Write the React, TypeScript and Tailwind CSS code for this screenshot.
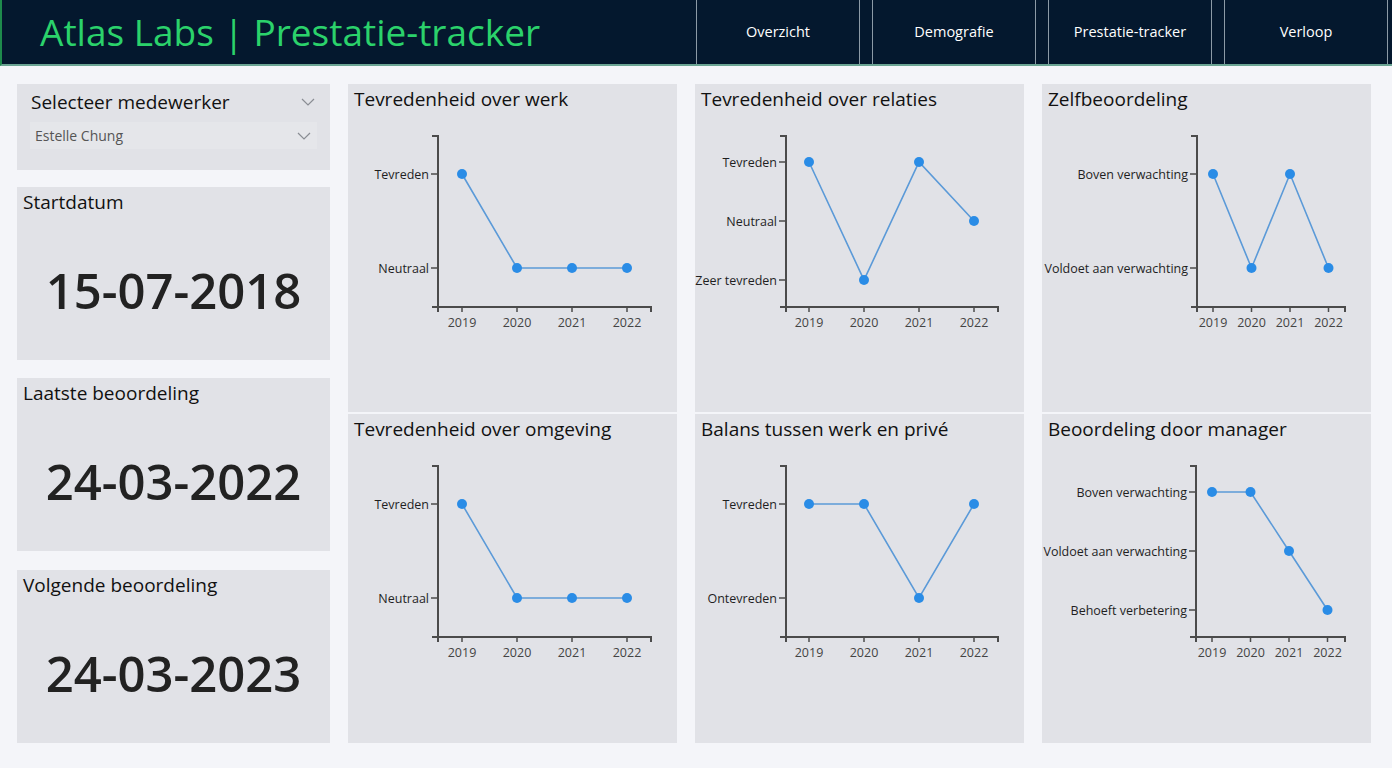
import React from "react";

const YEARS = ["2019", "2020", "2021", "2022"];

type ChartDef = {
  title: string;
  labels: string[];
  values: number[];
  axisX: number;
  firstX: number;
  step: number;
};

const CHARTS: ChartDef[] = [
  { title: "Tevredenheid over werk", labels: ["Tevreden", "Neutraal"], values: [0, 1, 1, 1], axisX: 90, firstX: 114, step: 55 },
  { title: "Tevredenheid over relaties", labels: ["Tevreden", "Neutraal", "Zeer tevreden"], values: [0, 2, 0, 1], axisX: 91, firstX: 114, step: 55 },
  { title: "Zelfbeoordeling", labels: ["Boven verwachting", "Voldoet aan verwachting"], values: [0, 1, 0, 1], axisX: 155, firstX: 171, step: 38.5 },
  { title: "Tevredenheid over omgeving", labels: ["Tevreden", "Neutraal"], values: [0, 1, 1, 1], axisX: 90, firstX: 114, step: 55 },
  { title: "Balans tussen werk en privé", labels: ["Tevreden", "Ontevreden"], values: [0, 0, 1, 0], axisX: 91, firstX: 114, step: 55 },
  { title: "Beoordeling door manager", labels: ["Boven verwachting", "Voldoet aan verwachting", "Behoeft verbetering"], values: [0, 0, 1, 2], axisX: 154, firstX: 170, step: 38.5 },
];

const NAV = ["Overzicht", "Demografie", "Prestatie-tracker", "Verloop"];

function Chevron({ className = "" }: { className?: string }) {
  return (
    <svg className={className} width="14" height="8" viewBox="0 0 14 8" fill="none">
      <path d="M1 1l6 6 6-6" stroke="#8a8d94" strokeWidth="1.2" />
    </svg>
  );
}

function LineChartCard({ def }: { def: ChartDef }) {
  const { title, labels, values, axisX, firstX, step } = def;
  const levels = labels.length === 2 ? [61, 155] : [49, 108, 167];
  const pts = values.map((v, i) => ({ x: firstX + i * step, y: levels[v] }));
  const bottom = 194;
  return (
    <div className="bg-[#e1e2e7] h-full">
      <h2 className="px-[6px] pt-[1px] leading-7 text-[19px] text-[#111]">{title}</h2>
      <svg width="329" height="240" viewBox="0 0 329 240" className="block">
        {/* axes */}
        <path d={`M${axisX - 6} 23H${axisX}V${bottom + 5}`} stroke="#4b4b4b" strokeWidth="2" fill="none" />
        <path d={`M${axisX - 6} ${bottom}H303V${bottom + 5}`} stroke="#4b4b4b" strokeWidth="2" fill="none" />
        {pts.map((p, i) => (
          <line key={i} x1={p.x} y1={bottom} x2={p.x} y2={bottom + 5} stroke="#4b4b4b" strokeWidth="1.5" />
        ))}
        {labels.map((l, i) => (
          <g key={l}>
            <line x1={axisX - 7} y1={levels[i]} x2={axisX} y2={levels[i]} stroke="#4b4b4b" strokeWidth="1.5" />
            <text x={axisX - 9} y={levels[i] + 4.5} textAnchor="end" fontSize="12.5" fill="#1f1f1f">
              {l}
            </text>
          </g>
        ))}
        {YEARS.map((y, i) => (
          <text key={y} x={firstX + i * step} y={214} textAnchor="middle" fontSize="12.5" fill="#444">
            {y}
          </text>
        ))}
        <polyline
          points={pts.map((p) => `${p.x},${p.y}`).join(" ")}
          fill="none"
          stroke="#5b9ad8"
          strokeWidth="1.6"
        />
        {pts.map((p, i) => (
          <circle key={i} cx={p.x} cy={p.y} r="5" fill="#2a8ce6" />
        ))}
      </svg>
    </div>
  );
}

function DateCard({ label, date }: { label: string; date: string }) {
  return (
    <div className="bg-[#e1e2e7] h-[173px] flex flex-col">
      <div className="px-[6px] pt-[1px] leading-7 text-[19px] text-[#111]">{label}</div>
      <div className="flex-1 flex items-center justify-center pt-[6px] text-[49px] font-semibold text-[#222]">
        {date}
      </div>
    </div>
  );
}

export default function App() {
  return (
    <div className="min-h-screen bg-[#f4f5f9] font-['Open_Sans',sans-serif]">
      <header className="h-[66px] bg-[#04182e] border-l-2 border-l-[#1e8a4c] border-b-2 border-b-[#6aa493] flex">
        <div className="flex-1 flex items-center pl-[38px]">
          <h1 className="text-[37px] text-[#2bd26b] leading-none pb-[2px]">Atlas Labs | Prestatie-tracker</h1>
        </div>
        <nav className="flex gap-[12px] pr-[4px] w-[696px]">
          {NAV.map((n) => (
            <div
              key={n}
              className="flex-1 flex items-center justify-center border-x border-[#8c9aa6] text-[14.5px] text-white"
            >
              {n}
            </div>
          ))}
        </nav>
      </header>

      <main className="grid grid-cols-[313px_329px_329px_329px] gap-x-[18px] pl-[17px] pt-[18px]">
        <div className="flex flex-col">
          <div className="bg-[#e1e2e7] h-[86px] px-[13px] pt-[4px]">
            <div className="flex items-center justify-between pl-[1px] pr-[2px]">
              <span className="text-[19px] leading-7 text-[#111]">Selecteer medewerker</span>
              <Chevron />
            </div>
            <div className="mt-[6px] h-[27px] bg-[#e5e6ea] flex items-center justify-between pl-[5px] pr-[6px]">
              <span className="text-[14px] text-[#555]">Estelle Chung</span>
              <Chevron />
            </div>
          </div>
          <div className="mt-[17px]">
            <DateCard label="Startdatum" date="15-07-2018" />
          </div>
          <div className="mt-[18px]">
            <DateCard label="Laatste beoordeling" date="24-03-2022" />
          </div>
          <div className="mt-[19px]">
            <DateCard label="Volgende beoordeling" date="24-03-2023" />
          </div>
        </div>

        {[0, 1, 2].map((col) => (
          <div key={col} className="flex flex-col gap-[2px]">
            <div className="h-[328px]">
              <LineChartCard def={CHARTS[col]} />
            </div>
            <div className="h-[329px]">
              <LineChartCard def={CHARTS[col + 3]} />
            </div>
          </div>
        ))}
      </main>
    </div>
  );
}
